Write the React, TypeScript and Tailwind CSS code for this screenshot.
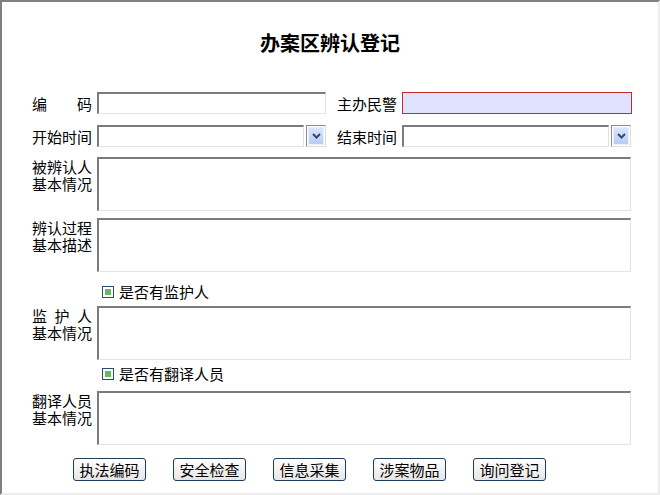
import React from "react";

const field =
  "border-t-2 border-l-2 border-r border-b border-t-[#7b7b7b] border-l-[#7b7b7b] border-r-[#e3e3e3] border-b-[#e3e3e3] bg-white outline-none";

function Label({ chars }: { chars: string[] }) {
  // spread characters over the 60px label column
  return (
    <div className="w-[60px] flex justify-between shrink-0 leading-[17px]">
      {chars.map((c, i) => (
        <span key={i}>{c}</span>
      ))}
    </div>
  );
}

function Select() {
  return (
    <div className="ml-[5px] w-[229px] h-[22px] flex gap-[2px]">
      <div className={`${field} flex-1 h-[22px]`} />
      <div className="w-[20px] h-[22px] border border-t-[#8a8a8a] border-l-[#8a8a8a] border-r-[#dcdcdc] border-b-[#dcdcdc] p-[1px]">
        <div className="w-full h-full bg-gradient-to-b from-[#dbe5fc] to-[#b9cbf4] border border-[#e8eefc] flex items-center justify-center">
          <svg width="9" height="6" viewBox="0 0 9 6">
            <path d="M1 1 L4.5 4.5 L8 1" stroke="#2c4a7d" strokeWidth="2" fill="none" />
          </svg>
        </div>
      </div>
    </div>
  );
}

function AreaRow({ label, className }: { label: React.ReactNode; className: string }) {
  return (
    <div className={`flex items-start ${className}`}>
      <div className="w-[60px] pt-[1px] shrink-0 leading-[17px] whitespace-nowrap">{label}</div>
      <textarea className={`${field} ml-[5px] w-[534px] h-[54px] resize-none`} />
    </div>
  );
}

function Check({ text, className }: { text: string; className: string }) {
  return (
    <div className={`flex items-center h-[16px] pl-[70px] gap-[5px] ${className}`}>
      <div className="w-[12px] h-[12px] border border-[#2a4d6e] bg-white p-[2px]">
        <div className="w-full h-full bg-[#66b866]" />
      </div>
      <span className="leading-[16px]">{text}</span>
    </div>
  );
}

const buttons = ["执法编码", "安全检查", "信息采集", "涉案物品", "询问登记"];

export default function App() {
  return (
    <div className="w-[660px] h-[495px] border-2 border-t-[#808080] border-l-[#808080] border-r-[#ececec] border-b-[#ececec] bg-white text-black text-[15px] font-['Noto_Sans_CJK_SC','SimSun',sans-serif]">
      <div className="pt-[29px] text-center text-[20px] font-bold leading-[24px]">办案区辨认登记</div>

      <div className="mt-[37px] pl-[30px]">
        <div className="flex items-center h-[22px]">
          <Label chars={["编", "码"]} />
          <input className={`${field} ml-[5px] w-[229px] h-[22px]`} />
          <div className="ml-[11px]">
            <Label chars={["主", "办", "民", "警"]} />
          </div>
          <input className="ml-[5px] w-[230px] h-[22px] border-[1.5px] border-[#c42a30] bg-[#e0e0ff] outline-none" />
        </div>

        <div className="flex items-center h-[22px] mt-[11px]">
          <Label chars={["开", "始", "时", "间"]} />
          <Select />
          <div className="ml-[11px]">
            <Label chars={["结", "束", "时", "间"]} />
          </div>
          <Select />
        </div>

        <AreaRow className="mt-[10px]" label={<>被辨认人<br />基本情况</>} />
        <AreaRow className="mt-[7px]" label={<>辨认过程<br />基本描述</>} />

        <Check className="mt-[12px]" text="是否有监护人" />
        <AreaRow
          className="mt-[6px]"
          label={<><span className="tracking-[7.5px]">监护</span>人<br />基本情况</>}
        />

        <Check className="mt-[6px]" text="是否有翻译人员" />
        <AreaRow className="mt-[9px]" label={<>翻译人员<br />基本情况</>} />

        <div className="flex mt-[13px] ml-[41px] gap-[27px]">
          {buttons.map((b) => (
            <button
              key={b}
              className="w-[73px] h-[23px] border border-[#1f3d5c] rounded-[3px] bg-gradient-to-b from-white to-[#e6e6e6] leading-[20px] text-[15px]"
            >
              {b}
            </button>
          ))}
        </div>
      </div>
    </div>
  );
}
